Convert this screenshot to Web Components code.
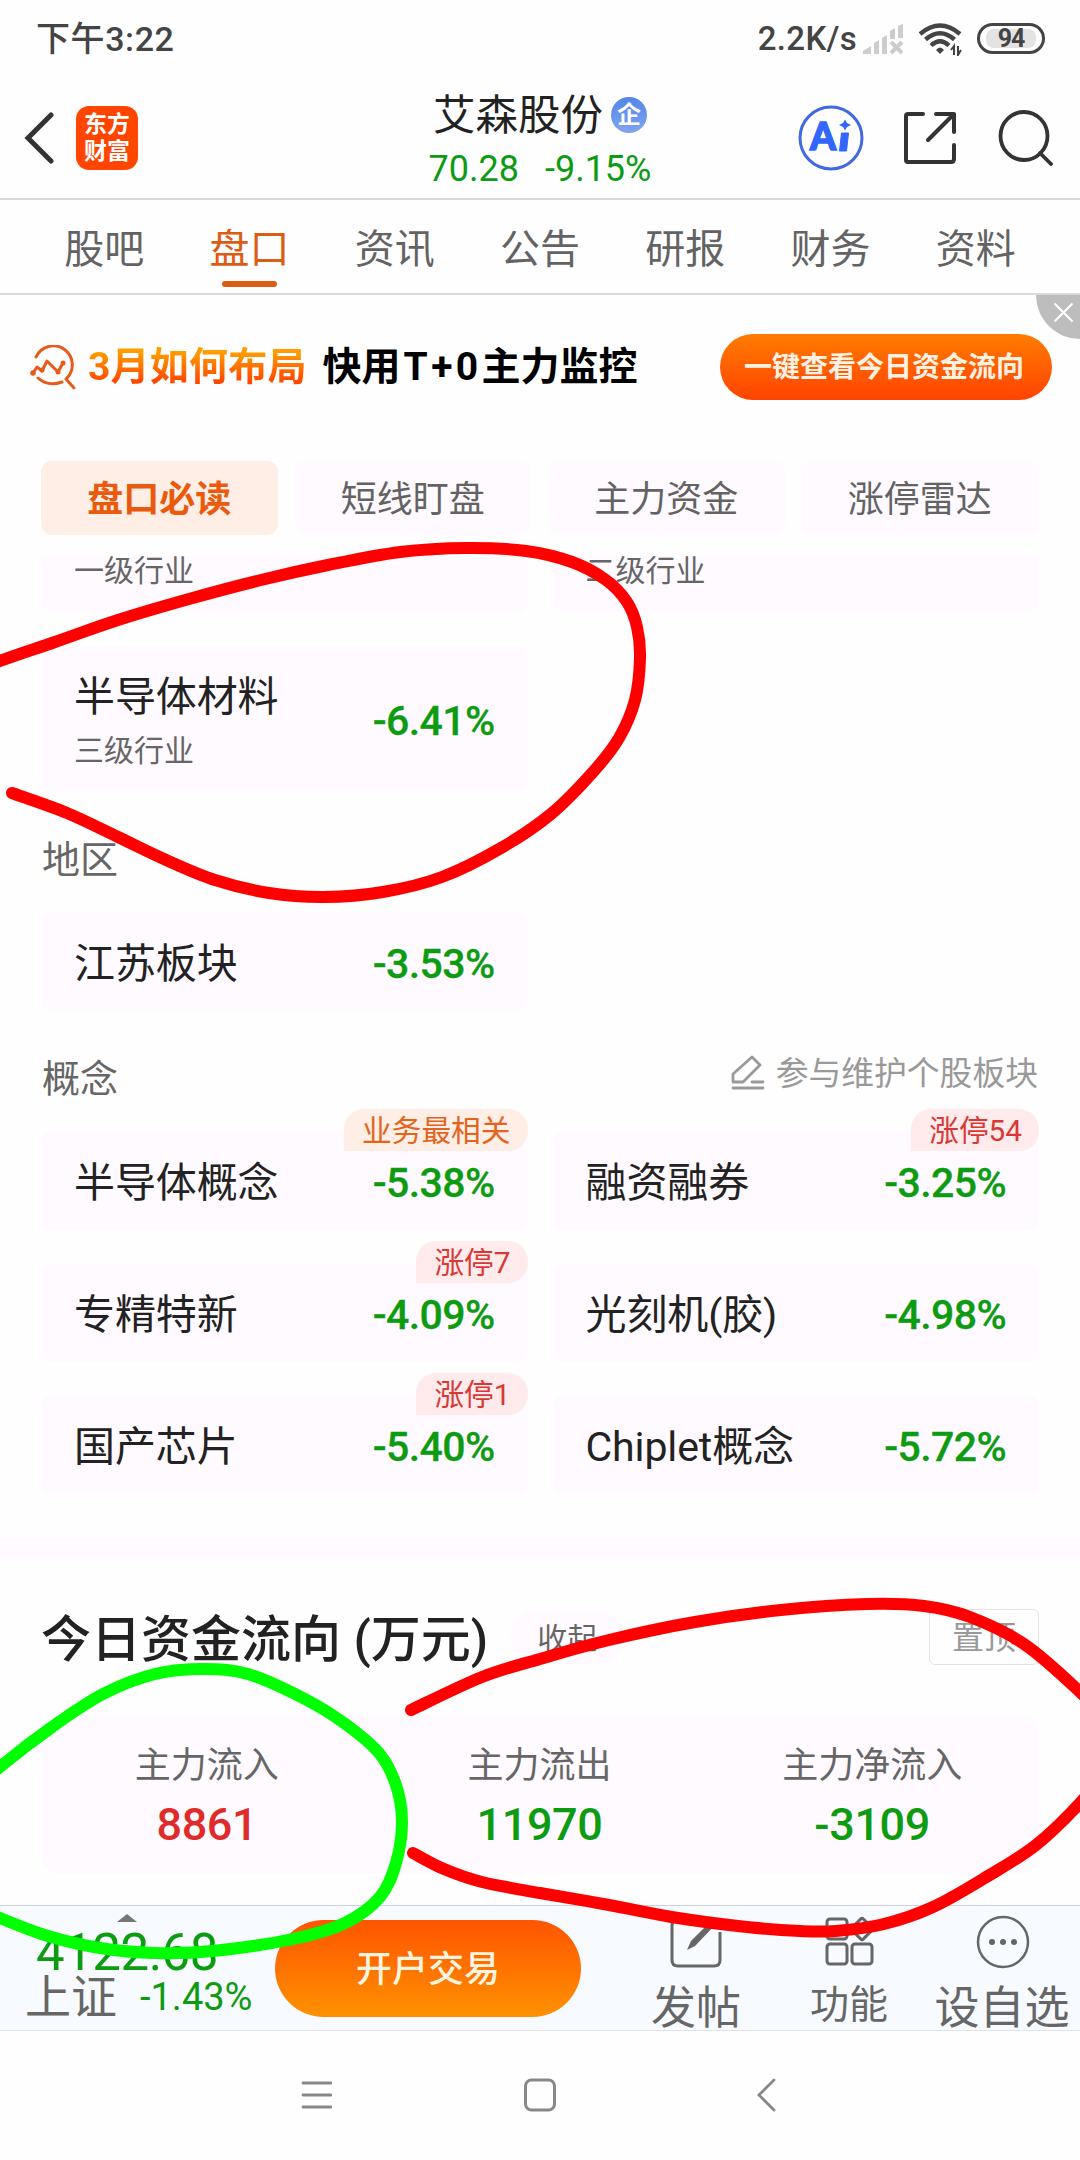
<!DOCTYPE html>
<html lang="zh-CN">
<head>
<meta charset="utf-8">
<title>艾森股份</title>
<style>
  html, body { margin:0; background:#fefefe; }
  body {
    width:1080px; height:2160px; overflow:hidden; position:relative; color:#222;
    font-family:Roboto,"Noto Sans CJK SC",sans-serif;
    --up:#e02b2b; --down:#0d9b12; --muted:#666; --tile:#fefaff; --accent:#dd5c14;
    display:flex; flex-direction:column;
  }
</style>
</head>
<body>
  <status-bar time="下午3:22" speed="2.2K/s" battery="94"></status-bar>
  <stock-header name="艾森股份" price="70.28" change="-9.15%"></stock-header>
  <tab-bar items="股吧,盘口,资讯,公告,研报,财务,资料" active="1"></tab-bar>
  <promo-banner>
    <span slot="hot">3月如何布局</span>
    <span slot="title">快用<span style="letter-spacing:3.400px;margin-left:3px">T+0</span>主力监控</span>
    <span slot="action">一键查看今日资金流向</span>
  </promo-banner>
  <chip-bar items="盘口必读,短线盯盘,主力资金,涨停雷达" active="0"></chip-bar>

  <scroll-panel>
    <tile-grid>
      <sector-tile clipped note="一级行业"></sector-tile>
      <sector-tile clipped note="二级行业"></sector-tile>
    </tile-grid>
    <tile-grid style="margin-top:34px">
      <sector-tile tall name="半导体材料" note="三级行业" change="-6.41%"></sector-tile>
    </tile-grid>
    <section-label style="margin-top:38px">地区</section-label>
    <tile-grid style="margin-top:24px">
      <sector-tile name="江苏板块" change="-3.53%"></sector-tile>
    </tile-grid>
    <section-label style="margin-top:38px">概念<span slot="action">参与维护个股板块</span></section-label>
    <tile-grid style="margin-top:24px">
      <sector-tile name="半导体概念" change="-5.38%" badge="业务最相关" tone="orange"></sector-tile>
      <sector-tile name="融资融券" change="-3.25%" badge="涨停54"></sector-tile>
      <sector-tile name="专精特新" change="-4.09%" badge="涨停7"></sector-tile>
      <sector-tile name="光刻机(胶)" change="-4.98%"></sector-tile>
      <sector-tile name="国产芯片" change="-5.40%" badge="涨停1"></sector-tile>
      <sector-tile name="Chiplet概念" change="-5.72%"></sector-tile>
    </tile-grid>
    <fund-flow>
      <span slot="title">今日资金流向 (万元)</span>
      <flow-cell label="主力流入" tone="up">8861</flow-cell>
      <flow-cell label="主力流出">11970</flow-cell>
      <flow-cell label="主力净流入">-3109</flow-cell>
    </fund-flow>
  </scroll-panel>

  <trade-bar index="4122.68" market="上证" change="-1.43%">开户交易</trade-bar>
  <system-nav></system-nav>

  <ink-layer>
    <ink-stroke color="#ff0000" points="-55,683 0,661 55,642 118,620 189,599 261,580 328,565 400,552 467,548 526,551 572,562 606,580 627,602 637,627 640,658 635,700 619,738 593,772 551,814 501,848 442,877 383,892 324,897 269,893 215,880 164,859 118,837 67,813 12,793"></ink-stroke>
    <ink-stroke color="#00ff00" points="-50,1812 0,1767 52,1727 103,1694 155,1674 203,1669 248,1674 303,1698 344,1723 379,1753 396,1785 402,1822 396,1863 380,1897 345,1923 293,1939 213,1951 155,1953 100,1948 48,1936 0,1918 -40,1900"></ink-stroke>
    <ink-stroke color="#ff0000" points="411,1710 482,1677 540,1659 609,1640 695,1622 781,1610 867,1604 924,1606 970,1617 1024,1644 1080,1692 1120,1735"></ink-stroke>
    <ink-stroke color="#ff0000" points="1110,1765 1080,1803 1036,1845 988,1876 933,1907 884,1924 836,1931 800,1931 747,1927 678,1918 609,1905 540,1893 482,1882 444,1869 413,1853"></ink-stroke>
  </ink-layer>

<script>
(() => {
  class Base extends HTMLElement {
    constructor() {
      super();
      this.attachShadow({ mode: "open" });
    }
    connectedCallback() {
      this.shadowRoot.innerHTML = `<style>*{box-sizing:border-box} svg{display:block;flex:none;fill:none}</style>${this.render()}`;
    }
    attr(name) {
      return this.getAttribute(name) || "";
    }
  }

  class StatusBar extends Base {
    render() {
      return `
        <style>
          :host { display:flex; align-items:center; flex:none; height:76px; padding:1px 35px 0 36px; color:#444; font-weight:500; font-size:34px; box-sizing:border-box; }
          .time { flex:1; letter-spacing:.6px; margin-top:-4px; }
          .speed { font-size:33px; letter-spacing:.3px; }
          .battery { width:68px; height:31px; margin-left:15px; padding:3px 6px; border:3px solid #444; border-radius:16px; }
          .level { height:19px; border-radius:8px; background:#e3e3e3; font:700 25px/20px Roboto; text-align:center; letter-spacing:-1px; }
        </style>
        <span class="time">${this.attr("time")}</span>
        <span class="speed">${this.attr("speed")}</span>
        <svg width="41" height="32" viewBox="0 0 41 32" style="margin:0 15px 0 6px">
          <g fill="#ccc"><path d="M0 31v-3l8-5v8z"/><path d="M11 20l5-3v14h-5zM19 15l5-3v19h-5zM27 8l5-3v11h-5zM35 3l5-2v14h-5z"/></g>
          <path d="M28 19l11 11M39 19L28 30" stroke="#ccc" stroke-width="4"/>
        </svg>
        <svg width="43" height="34" viewBox="0 0 43 34" stroke="#444" stroke-width="4.4">
          <path d="M1 12Q21-5 41 12M6.500 17.500Q21 5 35.500 17.500M12 23.500Q21 15 30 23.500"/>
          <path d="M17 28q4-5 8 0l-4 4z" fill="#444" stroke="none"/>
          <path d="M35 33V24l-3 4M39 24v9l3-5" stroke-width="2"/>
        </svg>
        <div class="battery"><div class="level">${this.attr("battery")}</div></div>`;
    }
  }

  class StockHeader extends Base {
    render() {
      return `
        <style>
          :host { display:grid; grid-template-columns:1fr 240px 1fr; flex:none; height:124px; border-bottom:2px solid #d9d9d9; box-sizing:border-box; }
          .left, .right { display:flex; align-items:center; padding-top:1px; }
          .left { padding-left:24px; }
          .right { justify-content:flex-end; padding-right:27px; }
          .logo { width:62px; height:64px; margin-left:22px; padding-top:5px; border-radius:13px; background:#ff4500; color:#fff; font-size:23px; line-height:27px; font-weight:700; text-align:center; }
          .mid { display:flex; flex-direction:column; align-items:center; white-space:nowrap; }
          .name { display:flex; align-items:center; height:50px; margin-top:15px; font-size:42.500px; line-height:50px; }
          .qi { width:36px; height:36px; margin:-2px 0 0 8px; border-radius:50%; background:linear-gradient(#5585e8,#80a5ef); color:#fff; font-size:24px; line-height:36px; font-weight:700; text-align:center; }
          .quote { display:flex; gap:26px; margin-top:7px; font-size:36px; line-height:42px; color:var(--down); }
        </style>
        <div class="left">
          <svg width="30" height="52" viewBox="0 0 30 52"><path d="M27 3L4 26l23 23" stroke="#333" stroke-width="5" stroke-linecap="round"/></svg>
          <div class="logo">东方<br>财富</div>
        </div>
        <div class="mid">
          <div class="name">${this.attr("name")}<span class="qi">企</span></div>
          <div class="quote"><span>${this.attr("price")}</span><span>${this.attr("change")}</span></div>
        </div>
        <div class="right">
          <svg width="66" height="68" viewBox="0 0 66 68" style="margin-right:39px">
            <circle cx="33" cy="34" r="31" stroke="#4169e1" stroke-width="3"/>
            <text x="12" y="46" font-family="Lato,Roboto" font-weight="900" font-size="37" fill="#3366ff" textLength="26" lengthAdjust="spacingAndGlyphs" stroke="#3366ff" stroke-width="1.500">A</text>
            <path d="M43.500 29h7l-2 18h-7z" fill="#3366ff" stroke="#3366ff" stroke-width="1"/>
            <path d="M47 15.500l2 3.500 4 2-4 2-2 3.500-2-3.500-4-2 4-2z" fill="#3366ff"/>
          </svg>
          <svg width="54" height="54" viewBox="0 0 54 54" style="margin-right:41px" stroke="#333" stroke-width="4" stroke-linecap="round" stroke-linejoin="round">
            <path d="M20 3H5q-2 0-2 2v44q0 2 2 2h43q3 0 3-3V34M33 3h18v18M51 3L25 29"/>
          </svg>
          <svg width="55" height="56" viewBox="0 0 55 56" stroke="#333" stroke-width="3.800" stroke-linecap="round">
            <ellipse cx="26" cy="26" rx="23.500" ry="24"/><path d="M42 43l11 11"/>
          </svg>
        </div>`;
    }
  }

  class TabBar extends Base {
    render() {
      const active = Number(this.attr("active"));
      const tabs = this.attr("items").split(",")
        .map((item, index) => `<div class="${index === active ? "on" : ""}">${item}</div>`).join("");
      return `
        <style>
          :host { display:grid; grid-template-columns:repeat(7,1fr); flex:none; height:95px; padding:0 31.500px; border-bottom:2px solid #d9dadd; box-sizing:border-box; }
          div { display:flex; flex-direction:column; align-items:center; padding-top:23px; font-size:40px; line-height:54px; color:#636363; }
          .on { color:var(--accent); }
          .on::after { content:""; width:55px; height:6px; margin-top:4px; border-radius:3px; background:var(--accent); }
        </style>${tabs}`;
    }
  }

  class PromoBanner extends Base {
    render() {
      return `
        <style>
          :host { display:flex; align-items:center; flex:none; height:142px; padding:1px 28px 0 30px; position:relative; font-weight:700; font-size:39px; white-space:nowrap; box-sizing:border-box; }
          .hot { margin:0 16px 0 12px; line-height:50px; letter-spacing:.2px; background:linear-gradient(#ff9d00 20%,#ff4600 80%); -webkit-background-clip:text; background-clip:text; color:transparent; }
          .title { flex:1; color:#000; line-height:50px; }
          .button { width:332px; height:66px; border-radius:33px; background:linear-gradient(#ff7b00,#ff4300); color:#fff2e4; font-size:28px; line-height:67px; padding-right:4px; text-align:center; }
          .close { position:absolute; right:0; top:0; width:44px; height:44px; border-bottom-left-radius:44px; background:#bdbdbd; }
        </style>
        <svg width="46" height="46" viewBox="0 0 46 46" style="margin-top:2px" stroke="#e85a1c" stroke-width="3" stroke-linecap="round" stroke-linejoin="round">
          <path d="M6 12A19 19 0 1 1 36 34M8 33q10 9 24 4M36 34l8 9" />
          <path d="M3 28l4-6 5 4 5-10 11 11 5-9"/>
          <g fill="#e85a1c" stroke="none"><circle cx="3" cy="28" r="2.800"/><circle cx="12" cy="25" r="2.500"/><circle cx="28" cy="27" r="2.500"/><circle cx="33" cy="18" r="2.500"/></g>
        </svg>
        <div class="hot"><slot name="hot"></slot></div>
        <div class="title"><slot name="title"></slot></div>
        <div class="button"><slot name="action"></slot></div>
        <div class="close"><svg width="44" height="44" stroke="#fff" stroke-width="2"><path d="M18.500 8.500l18 18M36.500 8.500l-18 18"/></svg></div>`;
    }
  }

  class ChipBar extends Base {
    render() {
      const active = Number(this.attr("active"));
      const chips = this.attr("items").split(",")
        .map((item, index) => `<div class="${index === active ? "on" : ""}">${item}</div>`).join("");
      return `
        <style>
          :host { display:grid; grid-template-columns:repeat(4,1fr); gap:17px; flex:none; height:119px; padding:24px 42px 21px 41px; box-sizing:border-box; }
          div { border-radius:11px; background:var(--tile); color:#636363; font-size:36px; line-height:78px; height:74px; text-align:center; }
          .on { background:#ffeee6; color:#e95a0c; font-weight:700; }
        </style>${chips}`;
    }
  }

  class ScrollPanel extends Base {
    render() {
      return `
        <style>:host { display:block; flex:none; height:1349px; overflow:hidden; }</style>
        <slot></slot>`;
    }
  }

  class TileGrid extends Base {
    render() {
      return `
        <style>:host { display:grid; grid-template-columns:1fr 1fr; gap:33px 25px; padding:0 41px; }</style>
        <slot></slot>`;
    }
  }

  class SectorTile extends Base {
    render() {
      const part = (name) => this.attr(name) ? `<span class="${name}">${this.attr(name)}</span>` : "";
      return `
        <style>
          :host { display:flex; align-items:center; justify-content:space-between; position:relative; height:99px; padding:4px 33px 0 33px; border-radius:11px; background:var(--tile); white-space:nowrap; box-sizing:border-box; }
          :host([tall]) { height:146px; }
          :host([clipped]) { height:56px; border-radius:0 0 11px 11px; align-items:flex-start; padding-top:0; }
          .text { display:flex; flex-direction:column; }
          .name { font-size:41px; line-height:56px; letter-spacing:-.1px; }
          .note { font-size:30px; line-height:30px; color:var(--muted); margin-bottom:3px; }
          :host([tall]) .note { margin:11px 0 7px; }
          .change { font-size:41px; font-weight:500; color:var(--down); line-height:48px; letter-spacing:-.6px; -webkit-text-stroke:.3px var(--down); }
          .badge { position:absolute; right:0; top:-22px; height:42px; padding:0 17px 0 18px; border-radius:20px 20px 20px 0; background:#ffebec; color:#d93835; font-size:29.700px; line-height:44px; }
          :host([tone=orange]) .badge { background:#ffeee6; color:#e3641c; }
        </style>
        <div class="text">${part("name")}${part("note")}</div>${part("change")}${part("badge")}`;
    }
  }

  class SectionLabel extends Base {
    render() {
      const action = this.querySelector("[slot=action]") ? `
        <svg width="34" height="36" viewBox="0 0 34 36" style="margin-top:-5px" stroke="#999" stroke-width="2.800" stroke-linejoin="round" stroke-linecap="round">
          <path d="M2 28v-8L21 3l8 8L12 28zM21 28h11M2 34h30"/>
        </svg>` : "";
      return `
        <style>
          :host { display:flex; align-items:center; height:58px; padding:0 42px; color:var(--muted); font-size:38px; line-height:58px; box-sizing:border-box; }
          .label { flex:1; margin-top:2px; }
          .action { display:flex; align-items:center; gap:11px; color:#999; font-size:32.800px; margin-top:-8px; }
        </style>
        <span class="label"><slot></slot></span>
        <span class="action">${action}<slot name="action"></slot></span>`;
    }
  }

  class FundFlow extends Base {
    render() {
      return `
        <style>
          :host { display:block; margin-top:44px; border-top:22px solid var(--tile); padding:50px 41px 0; }
          .head { display:flex; align-items:center; height:54px; }
          .title { font-size:50px; font-weight:500; line-height:60px; margin-top:6px; white-space:pre; }
          .fold { width:112px; height:54px; margin-left:23px; border-radius:27px; background:var(--tile); color:#666; font-size:30px; line-height:57px; text-align:center; }
          .pin { width:110px; height:56px; margin-left:auto; border:1.500px solid #e3e3e3; border-radius:6px; color:#999; font-size:32px; line-height:56px; text-align:center; }
          .cells { display:grid; grid-template-columns:repeat(3,1fr); height:159px; margin-top:51px; border-radius:20px; background:var(--tile); }
        </style>
        <div class="head"><span class="title"><slot name="title"></slot></span><span class="fold">收起</span><span class="pin">置顶</span></div>
        <div class="cells"><slot></slot></div>`;
    }
  }

  class FlowCell extends Base {
    render() {
      return `
        <style>
          :host { display:flex; flex-direction:column; align-items:center; padding:27px 1px 0 0; font-size:45px; font-weight:500; line-height:54px; letter-spacing:-.4px; color:var(--down); }
          :host([tone=up]) { color:var(--up); }
          .label { font-size:36px; font-weight:400; line-height:48px; letter-spacing:0; margin-bottom:8px; color:var(--muted); }
        </style>
        <span class="label">${this.attr("label")}</span><slot></slot>`;
    }
  }

  class TradeBar extends Base {
    render() {
      return `
        <style>
          :host { display:flex; flex:none; height:126px; border-top:1.500px solid #ccd1d8; border-bottom:1.500px solid #dfe3e8; background:#f7faff; color:var(--muted); box-sizing:border-box; white-space:nowrap; }
          .quote { width:275px; flex:none; padding:8px 0 0 25px; color:var(--down); }
          .index { padding-left:11px; margin-top:6px; font-size:51px; line-height:50px; letter-spacing:-.5px; }
          .row { display:flex; align-items:center; height:50px; margin-top:-6px; font-size:38px; line-height:50px; }
          .market { width:115px; color:var(--muted); font-size:46px; line-height:50px; }
          .button { width:306px; flex:none; height:97px; margin-top:14px; border-radius:49px; background:linear-gradient(#ff5500,#ff9100); color:#fff4df; font-size:36px; font-weight:500; line-height:100px; text-align:center; }
          .tools { display:grid; grid-template-columns:152px 154px 152px; margin-left:39px; }
          .tool { display:flex; flex-direction:column; align-items:center; font-size:45px; line-height:58px; padding-top:9px; }
          .tool span { margin:11px -10px 0; }
          .small { font-size:39px; }
          .small span { margin-top:7px; }
        </style>
        <div class="quote">
          <svg width="20" height="8" viewBox="0 0 20 8" style="margin-left:92px"><path d="M0 8L10 0l10 8z" fill="#777"/></svg>
          <div class="index">${this.attr("index")}</div>
          <div class="row"><span class="market">${this.attr("market")}</span><span>${this.attr("change")}</span></div>
        </div>
        <div class="button"><slot></slot></div>
        <div class="tools">
          <div class="tool">
            <svg width="54" height="54" viewBox="0 0 54 54" stroke="#666" stroke-width="3"><path d="M34 5H9q-6 0-6 6v34q0 6 6 6h36q6 0 6-6V17"/><path d="M18 35l4-9L44 4l4 4-22 23z" fill="#666" stroke="none"/></svg>
            <span>发帖</span>
          </div>
          <div class="tool small">
            <svg width="54" height="54" viewBox="0 0 54 54" stroke="#666" stroke-width="3"><rect x="5" y="4" width="20" height="20" rx="3"/><rect x="5" y="29" width="20" height="20" rx="3"/><rect x="30" y="29" width="20" height="20" rx="3"/><rect x="32" y="6" width="16" height="16" rx="2" transform="rotate(45 40 14)"/></svg>
            <span>功能</span>
          </div>
          <div class="tool">
            <svg width="54" height="54" viewBox="0 0 54 54" style="margin-left:2px" stroke="#666" stroke-width="2.500"><circle cx="27" cy="27" r="25"/><g fill="#666" stroke="none"><circle cx="16" cy="27" r="3"/><circle cx="27" cy="27" r="3"/><circle cx="38" cy="27" r="3"/></g></svg>
            <span>设自选</span>
          </div>
        </div>`;
    }
  }

  class SystemNav extends Base {
    render() {
      return `
        <style>:host { display:grid; grid-template-columns:34px 34px 34px; gap:191px; justify-content:center; flex:1; padding-top:47px; box-sizing:border-box; }</style>
        <svg width="34" height="34" stroke="#888" stroke-width="2.800" stroke-linecap="round"><path d="M5 5h28M5 17h28M5 29h28"/></svg>
        <svg width="34" height="34" stroke="#888" stroke-width="3"><rect x="2.500" y="2" width="29" height="30" rx="6"/></svg>
        <svg width="34" height="34" stroke="#888" stroke-width="2.800" stroke-linecap="round"><path d="M26 2L11 17l15 15"/></svg>`;
    }
  }

  // Freehand marks drawn over the page
  class InkLayer extends Base {
    render() {
      return `
        <style>:host { position:absolute; inset:0; display:grid; overflow:hidden; pointer-events:none; }</style>
        <slot></slot>`;
    }
  }

  class InkStroke extends Base {
    render() {
      const points = this.attr("points").split(" ").map((pair) => pair.split(",").map(Number));
      // Catmull-Rom through the points, written as cubic segments
      const path = points.slice(0, -1).map((p1, i) => {
        const p0 = points[i - 1] || p1;
        const p2 = points[i + 1];
        const p3 = points[i + 2] || p2;
        const c1 = [0, 1].map((k) => p1[k] + (p2[k] - p0[k]) / 6);
        const c2 = [0, 1].map((k) => p2[k] - (p3[k] - p1[k]) / 6);
        return `C${c1} ${c2} ${p2}`;
      }).join("");
      return `
        <style>:host { display:block; grid-area:1/1; }</style>
        <svg width="1080" height="2160" stroke="${this.attr("color")}" stroke-width="12" stroke-linecap="round" stroke-linejoin="round">
          <path d="M${points[0]}${path}"/>
        </svg>`;
    }
  }

  customElements.define("status-bar", StatusBar);
  customElements.define("stock-header", StockHeader);
  customElements.define("tab-bar", TabBar);
  customElements.define("promo-banner", PromoBanner);
  customElements.define("chip-bar", ChipBar);
  customElements.define("scroll-panel", ScrollPanel);
  customElements.define("tile-grid", TileGrid);
  customElements.define("sector-tile", SectorTile);
  customElements.define("section-label", SectionLabel);
  customElements.define("fund-flow", FundFlow);
  customElements.define("flow-cell", FlowCell);
  customElements.define("trade-bar", TradeBar);
  customElements.define("system-nav", SystemNav);
  customElements.define("ink-layer", InkLayer);
  customElements.define("ink-stroke", InkStroke);
})();
</script>
</body>
</html>
